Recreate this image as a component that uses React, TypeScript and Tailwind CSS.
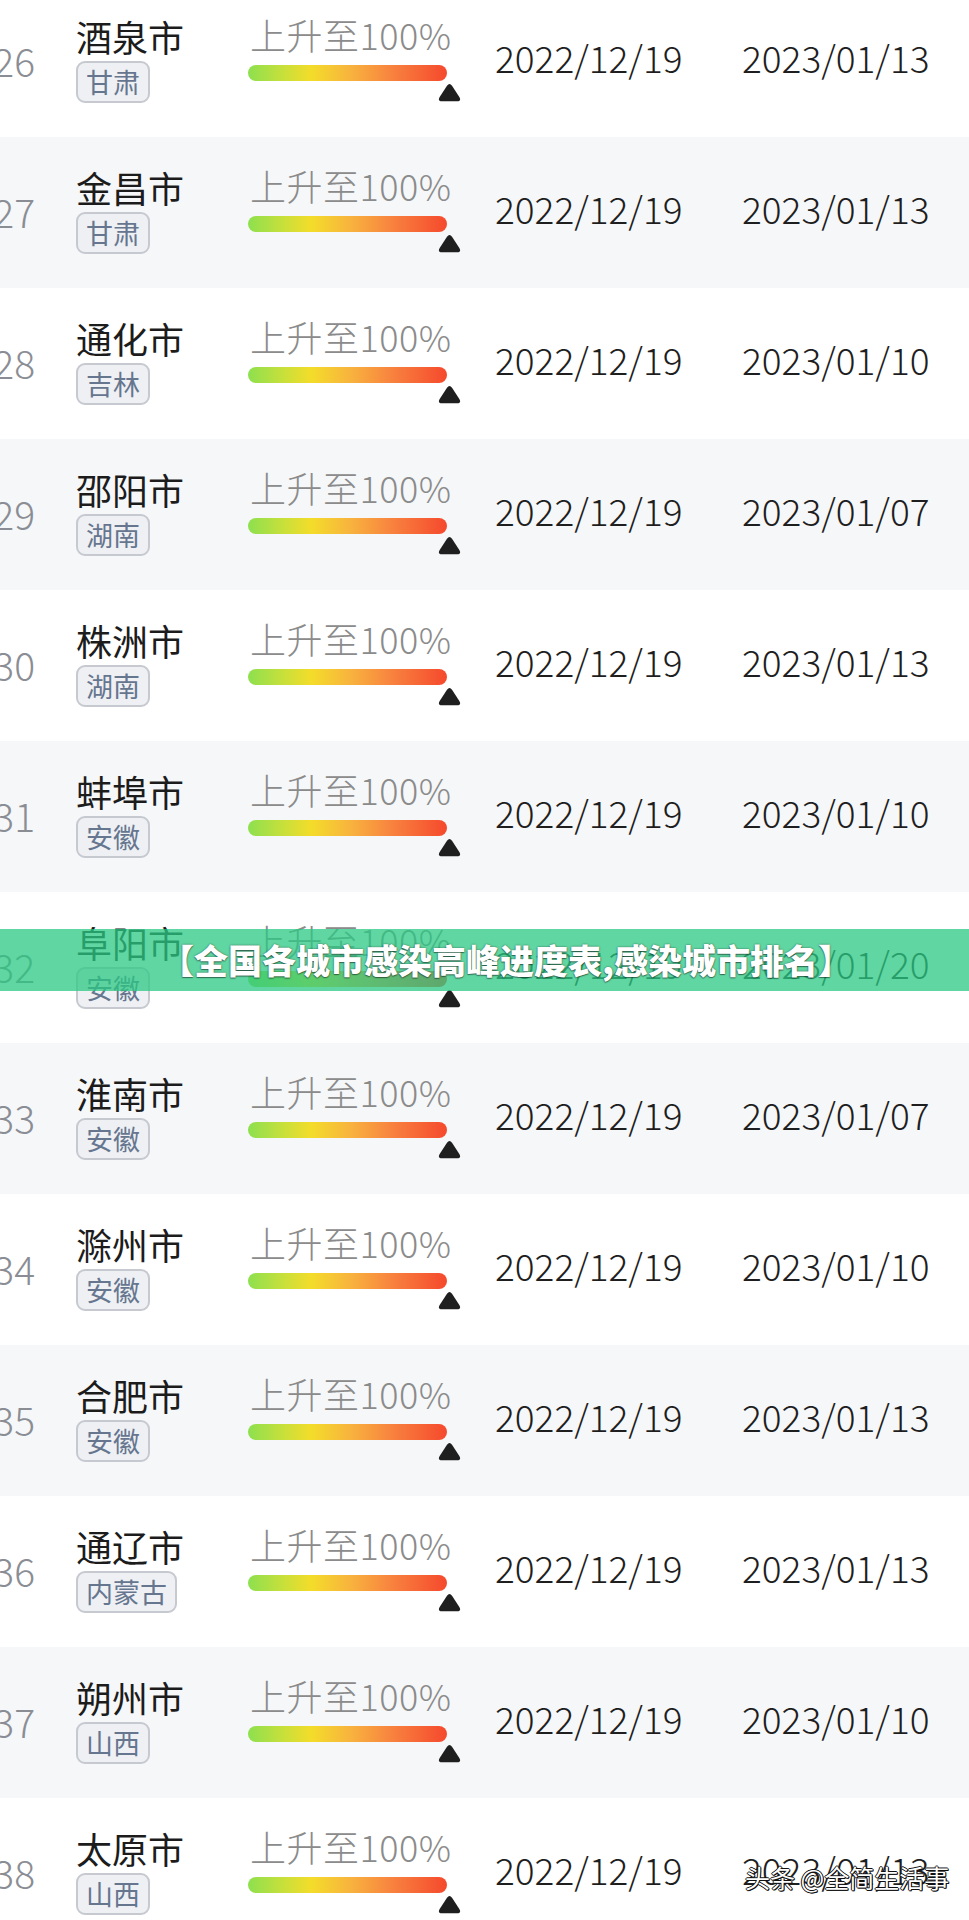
import React from "react";

type Row = { n: number; city: string; prov: string; end: string };

const rows: Row[] = [
  { n: 26, city: "酒泉市", prov: "甘肃", end: "2023/01/13" },
  { n: 27, city: "金昌市", prov: "甘肃", end: "2023/01/13" },
  { n: 28, city: "通化市", prov: "吉林", end: "2023/01/10" },
  { n: 29, city: "邵阳市", prov: "湖南", end: "2023/01/07" },
  { n: 30, city: "株洲市", prov: "湖南", end: "2023/01/13" },
  { n: 31, city: "蚌埠市", prov: "安徽", end: "2023/01/10" },
  { n: 32, city: "阜阳市", prov: "安徽", end: "2023/01/20" },
  { n: 33, city: "淮南市", prov: "安徽", end: "2023/01/07" },
  { n: 34, city: "滁州市", prov: "安徽", end: "2023/01/10" },
  { n: 35, city: "合肥市", prov: "安徽", end: "2023/01/13" },
  { n: 36, city: "通辽市", prov: "内蒙古", end: "2023/01/13" },
  { n: 37, city: "朔州市", prov: "山西", end: "2023/01/10" },
  { n: 38, city: "太原市", prov: "山西", end: "2023/01/13" },
];

const FONT = "font-['Noto_Sans_CJK_SC','Noto_Sans',sans-serif]";

function Triangle() {
  return (
    <svg width="23" height="19" viewBox="0 0 22 18">
      <path
        d="M8.6 2.6 Q11 -1 13.4 2.6 L20.4 13.4 Q22.6 17.4 18.4 17.4 L3.6 17.4 Q-0.6 17.4 1.6 13.4 Z"
        fill="#1f1f1f"
      />
    </svg>
  );
}

function RowView({ r, i }: { r: Row; i: number }) {
  return (
    <div
      className={`flex h-[151px] w-full ${i % 2 === 0 ? "bg-white" : "bg-[#f6f7f9]"}`}
    >
      <div className="flex w-[35px] shrink-0 items-center justify-end pb-[2px]">
        <span className="whitespace-nowrap text-[39px] font-light leading-none text-[#8a8d94]">
          {r.n}
        </span>
      </div>
      <div className="ml-[41px] flex w-[172px] shrink-0 flex-col items-start justify-center pb-[6px]">
        <div className="text-[36px] leading-[42px] text-[#1c1c1c] whitespace-nowrap">{r.city}</div>
        <div className="mt-[4px] flex h-[42px] items-center rounded-[9px] border-2 border-[#c6c9cf] bg-[#eef0f4] px-[8px] text-[27px] leading-none text-[#66768f] whitespace-nowrap">
          {r.prov}
        </div>
      </div>
      <div className="flex w-[247px] shrink-0 flex-col items-start pt-[27px]">
        <div className="pl-[2px] text-[36px] font-light leading-[42px] tracking-[0.5px] text-[#8b8b8b] whitespace-nowrap">
          上升至100%
        </div>
        <div className="mt-[10px] h-[16px] w-[199px] rounded-full bg-[linear-gradient(90deg,#8de04f_0%,#c8e03a_18%,#f4dc2a_32%,#f8b23e_52%,#f8833f_72%,#f5492d_100%)]" />
        <div className="mt-[2px] flex w-[213px] justify-end">
          <Triangle />
        </div>
      </div>
      <div className="flex w-[247px] shrink-0 items-center pb-[9px]">
        <span className="text-[37px] font-light leading-none text-[#1e1e1e] whitespace-nowrap">
          2022/12/19
        </span>
      </div>
      <div className="flex flex-1 items-center pb-[9px]">
        <span className="text-[37px] font-light leading-none text-[#1e1e1e] whitespace-nowrap">
          {r.end}
        </span>
      </div>
    </div>
  );
}

export default function App() {
  return (
    <div className={`relative h-[1920px] w-[969px] overflow-hidden bg-white ${FONT}`}>
      <div className="-mt-[14px] flex flex-col">
        {rows.map((r, i) => (
          <RowView key={r.n} r={r} i={i} />
        ))}
      </div>
      <div className="absolute left-0 top-[929px] flex h-[62px] w-full items-center justify-center bg-[rgba(43,200,131,0.75)] pl-[43px]">
        <span className="whitespace-nowrap text-[34px] font-black leading-none text-white [text-shadow:0_0_2px_rgba(0,0,0,0.55),0_1px_1px_rgba(0,0,0,0.4)]">
          【全国各城市感染高峰进度表,感染城市排名】
        </span>
      </div>
      <div className="absolute left-[745px] top-[1865px] whitespace-nowrap text-[25px] leading-none text-white [text-shadow:-1px_0_0_#111,1px_0_0_#111,0_-1px_0_#111,0_1px_0_#111,1px_1px_0_#111]">
        头条 @全简生活事
      </div>
    </div>
  );
}
